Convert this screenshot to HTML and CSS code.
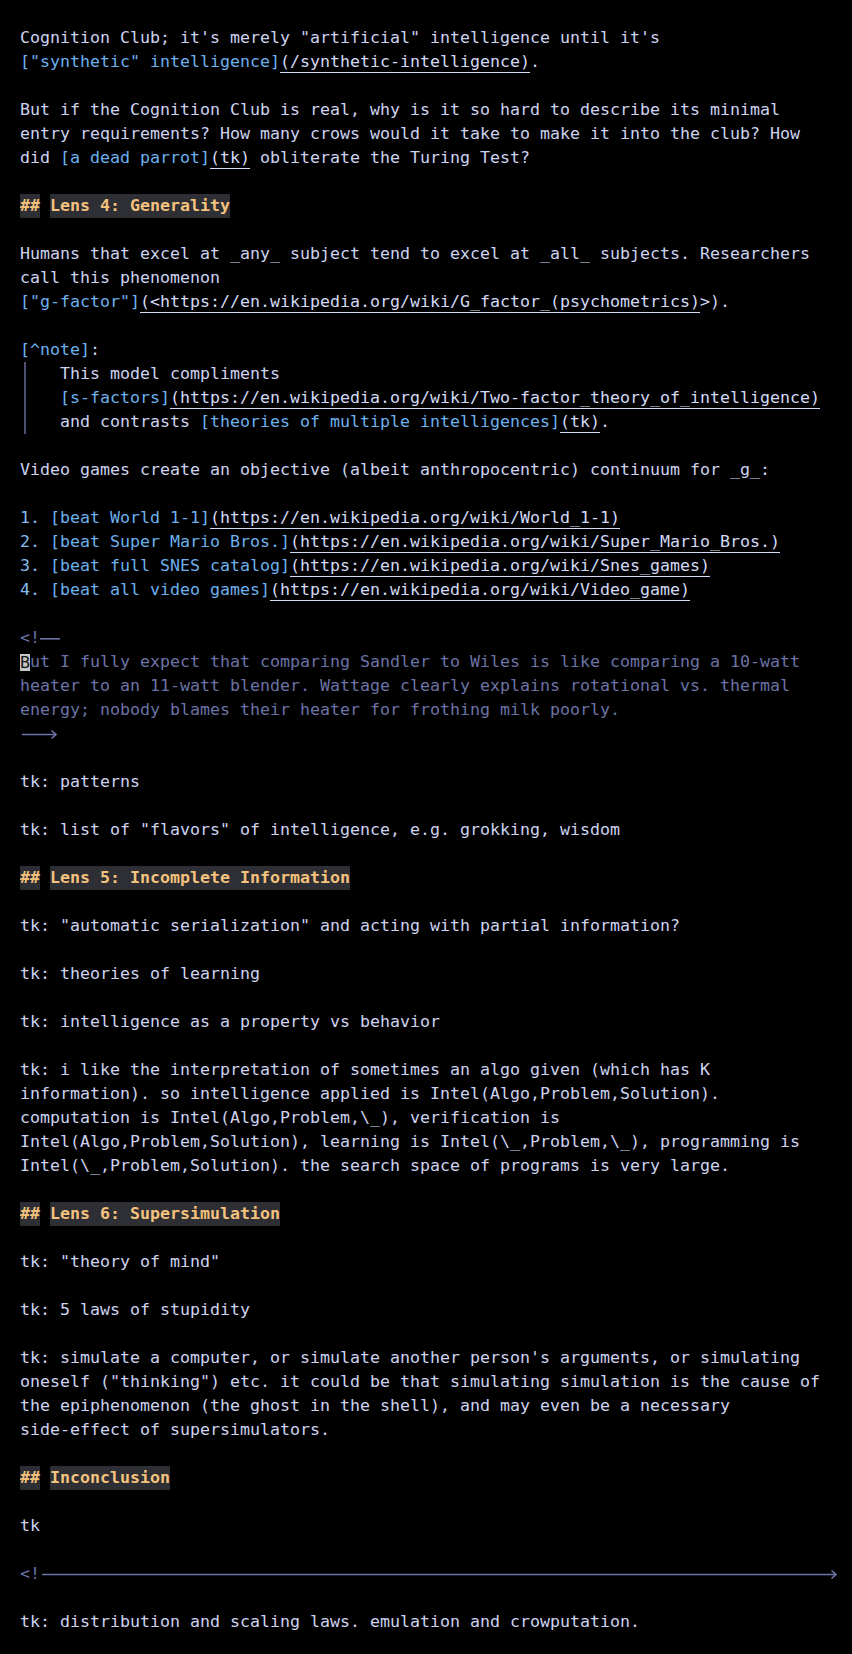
FILE: index.html
```html
<!DOCTYPE html>
<html lang="en">
<head>
<meta charset="utf-8">
<title>Cognition Club</title>
<link rel="stylesheet" href="styles.css">
</head>
<body>
<main class="doc">
<p class="p">Cognition Club; it's merely "artificial" intelligence until it's
<span class="lk">["synthetic" intelligence]</span><span class="url">(/synthetic-intelligence)</span>.</p>
<p class="p">But if the Cognition Club is real, why is it so hard to describe its minimal
entry requirements? How many crows would it take to make it into the club? How
did <span class="lk">[a dead parrot]</span><span class="url">(tk)</span> obliterate the Turing Test?</p>
<h2 class="p h"><span class="hm">##</span> <span class="ht">Lens 4: Generality</span></h2>
<p class="p">Humans that excel at _any_ subject tend to excel at _all_ subjects. Researchers
call this phenomenon
<span class="lk">["g-factor"]</span><span class="url">(&lt;https://en.wikipedia.org/wiki/G_factor_(psychometrics)</span>&gt;).</p>
<div class="p fn"><div class="fnlabel"><span class="lk">[^note]</span>:</div><div class="note">    This model compliments
    <span class="lk">[s-factors]</span><span class="url">(https://en.wikipedia.org/wiki/Two-factor_theory_of_intelligence)</span>
    and contrasts <span class="lk">[theories of multiple intelligences]</span><span class="url">(tk)</span>.</div></div>
<p class="p">Video games create an objective (albeit anthropocentric) continuum for _g_:</p>
<p class="p"><span class="num">1.</span> <span class="lk">[beat World 1-1]</span><span class="url">(https://en.wikipedia.org/wiki/World_1-1)</span>
<span class="num">2.</span> <span class="lk">[beat Super Mario Bros.]</span><span class="url">(https://en.wikipedia.org/wiki/Super_Mario_Bros.)</span>
<span class="num">3.</span> <span class="lk">[beat full SNES catalog]</span><span class="url">(https://en.wikipedia.org/wiki/Snes_games)</span>
<span class="num">4.</span> <span class="lk">[beat all video games]</span><span class="url">(https://en.wikipedia.org/wiki/Video_game)</span></p>
<p class="p cm">&lt;!<span class="lig">--</span>
<span class="cursor">B</span>ut I fully expect that comparing Sandler to Wiles is like comparing a 10-watt
heater to an 11-watt blender. Wattage clearly explains rotational vs. thermal
energy; nobody blames their heater for frothing milk poorly.
<span class="arrow">--&gt;<svg class="arrow-svg" width="40" height="24" viewBox="0 0 40 24" aria-hidden="true"><path d="M2 12.5H36M31.5 8.5L36 12.5L31.5 16.5" fill="none" stroke="#6b73a6" stroke-width="1.6"/></svg></span></p>
<p class="p">tk: patterns</p>
<p class="p">tk: list of "flavors" of intelligence, e.g. grokking, wisdom</p>
<h2 class="p h"><span class="hm">##</span> <span class="ht">Lens 5: Incomplete Information</span></h2>
<p class="p">tk: "automatic serialization" and acting with partial information?</p>
<p class="p">tk: theories of learning</p>
<p class="p">tk: intelligence as a property vs behavior</p>
<p class="p">tk: i like the interpretation of sometimes an algo given (which has K
information). so intelligence applied is Intel(Algo,Problem,Solution).
computation is Intel(Algo,Problem,\_), verification is
Intel(Algo,Problem,Solution), learning is Intel(\_,Problem,\_), programming is
Intel(\_,Problem,Solution). the search space of programs is very large.</p>
<h2 class="p h"><span class="hm">##</span> <span class="ht">Lens 6: Supersimulation</span></h2>
<p class="p">tk: "theory of mind"</p>
<p class="p">tk: 5 laws of stupidity</p>
<p class="p">tk: simulate a computer, or simulate another person's arguments, or simulating
oneself ("thinking") etc. it could be that simulating simulation is the cause of
the epiphenomenon (the ghost in the shell), and may even be a necessary
side-effect of supersimulators.</p>
<h2 class="p h"><span class="hm">##</span> <span class="ht">Inconclusion</span></h2>
<p class="p">tk</p>
<p class="p cm">&lt;!<span class="rule">-------------------------------------------------------------------------------&gt;<svg class="rule-svg" width="800" height="24" viewBox="0 0 800 24" aria-hidden="true"><path d="M2 12.5H796M791.5 8.5L796 12.5L791.5 16.5" fill="none" stroke="#6b73a6" stroke-width="1.6"/></svg></span></p>
<p class="p">tk: distribution and scaling laws. emulation and crowputation.</p>
</main>
</body>
</html>
```

FILE: styles.css
```css
html, body {
  margin: 0;
  background: #000000;
}

body {
  padding: 25.5px 20px 0;
  font-family: "DejaVu Sans Mono", "Liberation Mono", monospace;
  font-size: 16.61px;
  line-height: 24px;
  color: #cdd3f0;
}

.doc {
  display: block;
}

.p {
  margin: 0 0 24px;
  white-space: pre;
  font-size: inherit;
  font-weight: normal;
  line-height: 24px;
}

.h {
  font-weight: bold;
  color: #f4c27c;
}

.hm,
.ht {
  display: inline-block;
  height: 24px;
  line-height: 24px;
  background: #2e2e35;
  vertical-align: top;
}

.lk {
  color: #6cb0ee;
}

.num {
  color: #86bdf0;
}

.url {
  color: #d3daf6;
  text-decoration: underline;
  text-decoration-thickness: 1px;
  text-underline-offset: 5px;
}

.note {
  white-space: pre;
  background: linear-gradient(#4d5070, #4d5070) 4px 0 / 2px 100% no-repeat;
}

.cm {
  color: #6b73a6;
}

.lig {
  color: transparent;
  background: linear-gradient(#6b73a6, #6b73a6) 0 12px / 100% 1.6px no-repeat;
  display: inline-block;
  height: 24px;
  vertical-align: top;
}

.cursor {
  display: inline-block;
  height: 17px;
  line-height: 17px;
  margin-top: 4px;
  vertical-align: top;
  background: #c6c6c6;
  color: #161616;
}

.arrow,
.rule {
  position: relative;
  display: inline-block;
  height: 24px;
  vertical-align: top;
  color: transparent;
}

.arrow-svg,
.rule-svg {
  position: absolute;
  left: 0;
  top: 0;
  overflow: visible;
}
```
